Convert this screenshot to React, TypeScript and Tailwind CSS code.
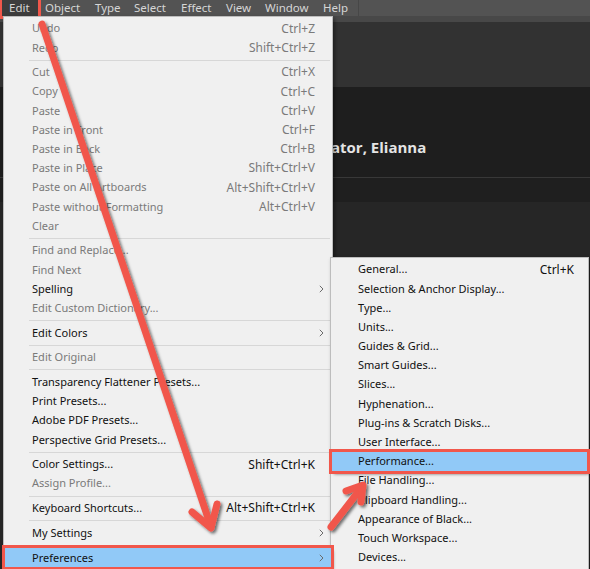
import React from "react";

type Item =
  | "sep"
  | { label: string; shortcut?: string; disabled?: boolean; sub?: boolean; active?: boolean };

const editItems: Item[] = [
  { label: "Undo", shortcut: "Ctrl+Z", disabled: true },
  { label: "Redo", shortcut: "Shift+Ctrl+Z", disabled: true },
  "sep",
  { label: "Cut", shortcut: "Ctrl+X", disabled: true },
  { label: "Copy", shortcut: "Ctrl+C", disabled: true },
  { label: "Paste", shortcut: "Ctrl+V", disabled: true },
  { label: "Paste in Front", shortcut: "Ctrl+F", disabled: true },
  { label: "Paste in Back", shortcut: "Ctrl+B", disabled: true },
  { label: "Paste in Place", shortcut: "Shift+Ctrl+V", disabled: true },
  { label: "Paste on All Artboards", shortcut: "Alt+Shift+Ctrl+V", disabled: true },
  { label: "Paste without Formatting", shortcut: "Alt+Ctrl+V", disabled: true },
  { label: "Clear", disabled: true },
  "sep",
  { label: "Find and Replace...", disabled: true },
  { label: "Find Next", disabled: true },
  { label: "Spelling", sub: true },
  { label: "Edit Custom Dictionary...", disabled: true },
  "sep",
  { label: "Edit Colors", sub: true },
  "sep",
  { label: "Edit Original", disabled: true },
  "sep",
  { label: "Transparency Flattener Presets..." },
  { label: "Print Presets..." },
  { label: "Adobe PDF Presets..." },
  { label: "Perspective Grid Presets..." },
  "sep",
  { label: "Color Settings...", shortcut: "Shift+Ctrl+K" },
  { label: "Assign Profile...", disabled: true },
  "sep",
  { label: "Keyboard Shortcuts...", shortcut: "Alt+Shift+Ctrl+K" },
  "sep",
  { label: "My Settings", sub: true },
  "sep",
  { label: "Preferences", sub: true, active: true },
];

const prefItems: Item[] = [
  { label: "General...", shortcut: "Ctrl+K" },
  { label: "Selection & Anchor Display..." },
  { label: "Type..." },
  { label: "Units..." },
  { label: "Guides & Grid..." },
  { label: "Smart Guides..." },
  { label: "Slices..." },
  { label: "Hyphenation..." },
  { label: "Plug-ins & Scratch Disks..." },
  { label: "User Interface..." },
  { label: "Performance...", active: true },
  { label: "File Handling..." },
  { label: "Clipboard Handling..." },
  { label: "Appearance of Black..." },
  { label: "Touch Workspace..." },
  { label: "Devices..." },
];

const menuBar = [
  { label: "Edit", w: "w-[36px]", active: true },
  { label: "Object", w: "w-[50px]" },
  { label: "Type", w: "w-[39px]" },
  { label: "Select", w: "w-[47px]" },
  { label: "Effect", w: "w-[45px]" },
  { label: "View", w: "w-[39px]" },
  { label: "Window", w: "w-[58px]" },
  { label: "Help", w: "w-[41px]" },
];

function Chevron() {
  return (
    <svg width="5" height="8" viewBox="0 0 5 8" className="block">
      <path d="M0.8 0.8 L4 4 L0.8 7.2" fill="none" stroke="#6b6b6b" strokeWidth="1" />
    </svg>
  );
}

function MenuRows({ items, sub }: { items: Item[]; sub?: boolean }) {
  return (
    <>
      {items.map((it, i) =>
        it === "sep" ? (
          <div key={i} className={`h-[5.5px] flex items-center ${sub ? "ml-[24px]" : "ml-[24px] mr-[1px]"}`}>
            <div className="h-px w-full bg-[#d7d7d7]" />
          </div>
        ) : (
          <div
            key={i}
            className={`h-[19.2px] flex items-center whitespace-nowrap ${sub ? "pl-[26px] pr-[13px]" : "pl-[27px]"} ${
              it.active
                ? "bg-[#91c9f7] outline-[3px] outline-[#f1574b] shadow-[2px_3px_3px_rgba(0,0,0,0.55)] relative z-10"
                : ""
            } ${it.disabled ? "text-[#7a7a7a]" : "text-[#111]"}`}
          >
            <span>{it.label}</span>
            <span className="ml-auto text-[12px]">{it.shortcut}</span>
            {!sub && (
              <span className="w-[16px] h-full flex items-center pl-[4px]">{it.sub && <Chevron />}</span>
            )}
          </div>
        )
      )}
    </>
  );
}

export default function App() {
  return (
    <div className="relative w-[590px] h-[569px] overflow-hidden bg-[#262626] font-['Segoe_UI','Noto_Sans',sans-serif] text-[11px]">
      {/* Menu bar */}
      <div className="h-[16px] bg-[#535353] flex items-center pl-[2px] text-[#d6d6d6] text-[11.5px]">
        {menuBar.map((m) => (
          <div
            key={m.label}
            className={`${m.w} h-full flex items-center pl-[7px] ${
              m.active ? "bg-[#3d3d3d] outline-[3px] outline-[#f1574b]" : ""
            }`}
          >
            {m.label}
          </div>
        ))}
        <div className="w-px h-full bg-[#474747] ml-[1px]" />
      </div>

      {/* App background */}
      <div className="h-[6px] bg-[#484848]" />
      <div className="h-[65px] bg-[#323232]" />
      <div className="h-[90px] bg-[#1e1e1e] pt-[50px] pl-[331px]">
        <div className="font-['Open_Sans',sans-serif] font-bold text-[15px] leading-[20px] text-[#e4e4e4]">
          ator, Elianna
        </div>
      </div>
      <div className="h-px bg-[#383838]" />
      <div className="h-[24px] bg-[#1f1f1f]" />

      {/* Edit menu */}
      <div className="absolute left-[3px] top-[16px] w-[330px] h-[570px] bg-[#f0f0f0] border border-[#bdbdbd] pt-[2px] px-px shadow-[2px_2px_4px_rgba(0,0,0,0.4)]">
        <MenuRows items={editItems} />
      </div>

      {/* Preferences submenu */}
      <div className="absolute left-[330px] top-[257px] w-[259px] h-[330px] bg-[#f0f0f0] border border-[#bdbdbd] pt-[2px] px-px shadow-[2px_2px_4px_rgba(0,0,0,0.4)]">
        <MenuRows items={prefItems} sub />
      </div>

      {/* Annotation arrows */}
      <svg className="absolute inset-0 pointer-events-none" width="590" height="569" viewBox="0 0 590 569">
        <defs>
          <filter id="sh" x="-20%" y="-20%" width="140%" height="140%">
            <feDropShadow dx="2" dy="2" stdDeviation="1.6" floodColor="#000" floodOpacity="0.55" />
          </filter>
        </defs>
        <g fill="none" stroke="#f1574b" strokeLinecap="round" strokeLinejoin="round" filter="url(#sh)">
          <path d="M42 24 L211 527" strokeWidth="7" />
          <path d="M192 512 L211 528 L217 504" strokeWidth="7" />
          <path d="M331 527 L362 487" strokeWidth="7" />
          <path d="M346 491 L363 485 L361 502" strokeWidth="7" />
        </g>
      </svg>
    </div>
  );
}
